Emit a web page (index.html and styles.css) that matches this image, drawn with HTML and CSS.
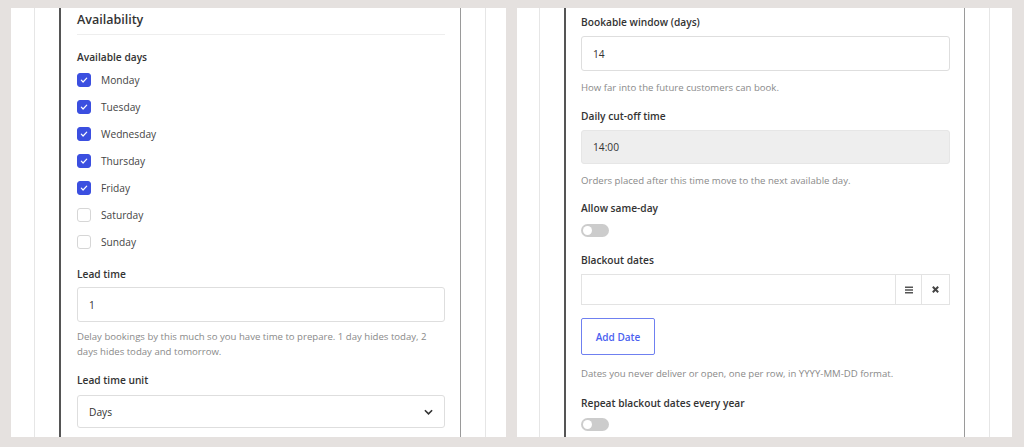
FILE: index.html
```html
<!DOCTYPE html>
<html lang="en">
<head>
    <meta charset="UTF-8">
    <meta name="viewport" content="width=device-width, initial-scale=1.0">
    <title>Availability settings</title>
    <link rel="stylesheet" href="styles.css">
</head>
<body>
    <div class="page">
        <!-- left: top of the availability section -->
        <div class="panel">
            <div class="frame">
                <div class="card">
                    <h2 class="section-title">Availability</h2>

                    <div class="field field--days">
                        <div class="field-label field-label--tight">Available days</div>
                        <ul class="day-list">
                            <li class="day"><span class="check is-checked"><svg viewBox="0 0 10 10"><path d="M2.3 5.2l1.8 1.8 3.6-3.8"/></svg></span>Monday</li>
                            <li class="day"><span class="check is-checked"><svg viewBox="0 0 10 10"><path d="M2.3 5.2l1.8 1.8 3.6-3.8"/></svg></span>Tuesday</li>
                            <li class="day"><span class="check is-checked"><svg viewBox="0 0 10 10"><path d="M2.3 5.2l1.8 1.8 3.6-3.8"/></svg></span>Wednesday</li>
                            <li class="day"><span class="check is-checked"><svg viewBox="0 0 10 10"><path d="M2.3 5.2l1.8 1.8 3.6-3.8"/></svg></span>Thursday</li>
                            <li class="day"><span class="check is-checked"><svg viewBox="0 0 10 10"><path d="M2.3 5.2l1.8 1.8 3.6-3.8"/></svg></span>Friday</li>
                            <li class="day"><span class="check"></span>Saturday</li>
                            <li class="day"><span class="check"></span>Sunday</li>
                        </ul>
                    </div>

                    <div class="field">
                        <div class="field-label field-label--short">Lead time</div>
                        <div class="input">1</div>
                        <p class="help">Delay bookings by this much so you have time to prepare. 1 day hides today, 2 days hides today and tomorrow.</p>
                    </div>

                    <div class="field">
                        <div class="field-label field-label--wide">Lead time unit</div>
                        <div class="input input--select">
                            Days
                            <svg class="chevron" viewBox="0 0 10 6"><path d="M1 1l4 4 4-4"/></svg>
                        </div>
                    </div>
                </div>
            </div>
        </div>

        <!-- right: further down the same form -->
        <div class="panel panel--right">
            <div class="frame">
                <div class="card card--scrolled">
                    <div class="field">
                        <div class="field-label">Bookable window (days)</div>
                        <div class="input">14</div>
                        <p class="help">How far into the future customers can book.</p>
                    </div>

                    <div class="field field--before-toggle">
                        <div class="field-label">Daily cut-off time</div>
                        <div class="input input--disabled">14:00</div>
                        <p class="help">Orders placed after this time move to the next available day.</p>
                    </div>

                    <div class="field field--toggle">
                        <div class="field-label">Allow same-day</div>
                        <span class="toggle"></span>
                    </div>

                    <div class="field field--dates">
                        <div class="field-label">Blackout dates</div>
                        <div class="date-row">
                            <div class="date-input"></div>
                            <span class="date-btn">
                                <svg viewBox="0 0 10 8"><path d="M1 1.2h8M1 4h8M1 6.8h8"/></svg>
                            </span>
                            <span class="date-btn date-btn--remove">
                                <svg viewBox="0 0 10 10"><path d="M2 2l6 6M8 2l-6 6"/></svg>
                            </span>
                        </div>
                        <button class="add-btn">Add Date</button>
                        <p class="help help--loose">Dates you never deliver or open, one per row, in YYYY-MM-DD format.</p>
                    </div>

                    <div class="field field--toggle">
                        <div class="field-label">Repeat blackout dates every year</div>
                        <span class="toggle toggle--close"></span>
                    </div>
                </div>
            </div>
        </div>
    </div>
</body>
</html>
```

FILE: styles.css
```css
* {
    box-sizing: border-box;
}

body {
    margin: 0;
    background-color: #e5e1df;
    font-family: "Open Sans", "Noto Sans", sans-serif;
    color: #333;
}

.page {
    display: flex;
    gap: 11px;
    padding: 8px 0 0 11px;
    height: 447px;
}

.panel {
    width: 495px;
    height: 429px;
    background-color: white;
    overflow: hidden;
}

.frame {
    height: 100%;
    margin: 0 20px 0 23px;
    border-left: 1px solid #e6e6e6;
    border-right: 1px solid #e6e6e6;
    padding: 0 24px;
}

.panel--right .frame {
    margin: 0 22px 0 22px;
}

.card {
    height: 100%;
    border-left: 2px solid #555;
    border-right: 1px solid #9a9a9a;
    padding: 2px 15px 0 16px;
}

.card--scrolled {
    padding: 6px 14px 0 15px;
}

.section-title {
    margin: 0 0 14px;
    padding-bottom: 4px;
    border-bottom: 1px solid #eee;
    font-size: 12.5px;
    font-weight: 600;
    line-height: 20px;
    color: #333;
}

.field {
    margin-bottom: 13px;
}

.field--days {
    margin-bottom: 11px;
}

.field--before-toggle {
    margin-bottom: 12px;
}

.field--toggle {
    margin-bottom: 15px;
}

.field--dates {
    margin-bottom: 14px;
}

.field-label {
    font-size: 10.2px;
    font-weight: 600;
    line-height: 16px;
    margin-bottom: 6px;
    color: #333;
}

.field-label--tight {
    margin-bottom: 1px;
}

.field-label--short {
    margin-bottom: 5px;
}

.field-label--wide {
    margin-bottom: 7px;
}

.day-list {
    list-style: none;
    margin: 0;
    padding: 0;
}

.day {
    display: flex;
    align-items: center;
    height: 27px;
    font-size: 10.2px;
    color: #444;
}

.check {
    width: 14px;
    height: 14px;
    margin-right: 10px;
    border: 1px solid #d6d6d6;
    border-radius: 3px;
    background-color: white;
    display: flex;
    align-items: center;
    justify-content: center;
}

.check.is-checked {
    background-color: #3b4fe0;
    border-color: #3b4fe0;
}

.check svg {
    width: 10px;
    height: 10px;
    fill: none;
    stroke: white;
    stroke-width: 1.2;
    stroke-linecap: round;
    stroke-linejoin: round;
}

.input {
    height: 35px;
    border: 1px solid #dedede;
    border-radius: 3px;
    padding: 0 11px;
    display: flex;
    align-items: center;
    font-size: 10.2px;
    color: #333;
}

.input--select {
    height: 33px;
    justify-content: space-between;
}

.input--disabled {
    height: 34px;
    background-color: #eee;
    border-color: #e6e6e6;
}

.chevron {
    width: 9px;
    height: 6px;
    fill: none;
    stroke: #333;
    stroke-width: 1.8;
}

.help {
    margin: 9px 0 0;
    font-size: 9.6px;
    line-height: 15px;
    color: #8a8a8a;
}

.card:not(.card--scrolled) .help {
    margin-top: 7px;
}

.help--loose {
    margin-top: 11px;
}

.toggle {
    display: block;
    position: relative;
    width: 28px;
    height: 13px;
    margin-top: 8px;
    border-radius: 7px;
    background-color: #ccc;
}

.toggle--close {
    margin-top: 7px;
}

.toggle::after {
    content: "";
    position: absolute;
    left: 2px;
    top: 2px;
    width: 9px;
    height: 9px;
    border-radius: 50%;
    background-color: white;
}

.date-row {
    display: flex;
    height: 31px;
    border: 1px solid #e3e3e3;
}

.date-input {
    flex: 1;
}

.date-btn {
    width: 26px;
    border-left: 1px solid #e3e3e3;
    display: flex;
    align-items: center;
    justify-content: center;
}

.date-btn--remove {
    width: 28px;
}

.date-btn svg {
    width: 10px;
    height: 8px;
    fill: none;
    stroke: #555;
    stroke-width: 1.4;
}

.date-btn--remove svg {
    width: 9px;
    height: 9px;
    stroke: #444;
    stroke-width: 2.2;
}

.add-btn {
    display: block;
    margin-top: 13px;
    width: 74px;
    height: 37px;
    padding: 0;
    border: 1px solid #6f80f0;
    border-radius: 2px;
    background-color: white;
    font-family: inherit;
    font-size: 10px;
    font-weight: 600;
    color: #4b5ff0;
}
```
